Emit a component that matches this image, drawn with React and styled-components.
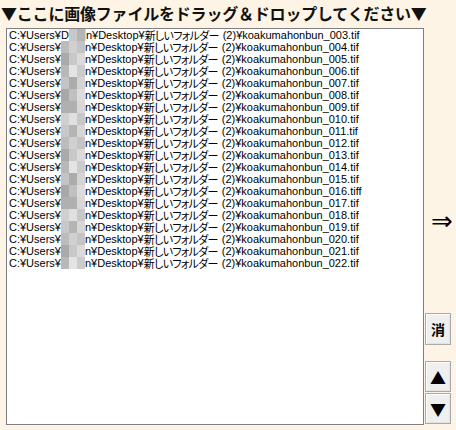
import React from "react";
import styled, { createGlobalStyle } from "styled-components";

const GlobalStyle = createGlobalStyle`
  html, body {
    margin: 0;
    padding: 0;
    background: #fdf4e5;
    overflow: hidden;
  }
`;

const files = [
  "003", "004", "005", "006", "007", "008", "009", "010", "011", "012",
  "013", "014", "015", "016", "017", "018", "019", "020", "021", "022",
].map((n) => `koakumahonbun_${n}.tif${n === "016" ? "f" : ""}`);

const mosaic = [
  ["#c8c8c8", "#b4b4b4", "#d6d6d6"],
  ["#bcbcbc", "#d0d0d0", "#c4c4c4"],
  ["#aaaaaa", "#c8c8c8", "#dadada"],
  ["#b8b8b8", "#e4e4e4", "#cccccc"],
  ["#c4c4c4", "#acacac", "#d4d4d4"],
  ["#a8a8a8", "#c0c0c0", "#dcdcdc"],
  ["#b0b0b0", "#b0b0b0", "#d8d8d8"],
  ["#d0d0d0", "#e0e0e0", "#c8c8c8"],
];

function App() {
  return (
    <>
      <GlobalStyle />
      <Page>
        <Title>▼ここに画像ファイルをドラッグ＆ドロップしてください▼</Title>
        <Body>
          <ListBox>
            {files.map((name, i) => (
              <Line key={name}>
                C:¥Users¥{i === 0 ? "D" : ""}
                <Mosaic $first={i === 0}>
                  {mosaic[i % mosaic.length].map((c, j) => (
                    <Cell key={j} style={{ background: c }} />
                  ))}
                </Mosaic>
                n¥Desktop¥<Kana>新しいフォルダー</Kana>(2)¥{name}
              </Line>
            ))}
          </ListBox>
          <Side>
            <Arrow>⇒</Arrow>
            <Spacer />
            <SideButton>消</SideButton>
            <ScrollButtons>
              <SideButton $tall>▲</SideButton>
              <SideButton $tall>▼</SideButton>
            </ScrollButtons>
          </Side>
        </Body>
      </Page>
    </>
  );
}

const Page = styled.div`
  width: 456px;
  height: 430px;
  display: flex;
  flex-direction: column;
`;

const Title = styled.div`
  height: 28px;
  padding-left: 1px;
  font-family: "Noto Sans CJK JP", sans-serif;
  font-weight: 700;
  font-size: 16px;
  line-height: 26px;
  color: #111;
  white-space: nowrap;
  letter-spacing: -0.2px;
`;

const Body = styled.div`
  display: flex;
  padding-left: 6px;
  gap: 1px;
`;

const ListBox = styled.div`
  width: 414px;
  height: 395px;
  padding-left: 2px;
  border: 1px solid #7f7f7f;
  background: #fff;
  overflow: hidden;
`;

const Line = styled.div`
  height: 12px;
  line-height: 12px;
  font-family: "Liberation Sans", "Noto Sans CJK JP", sans-serif;
  font-size: 11px;
  color: #000;
  white-space: nowrap;
`;

const Kana = styled.span`
  display: inline-block;
  vertical-align: top;
  height: 12px;
  line-height: 12px;
  font-family: "Noto Sans CJK JP", sans-serif;
  font-feature-settings: "palt";
  letter-spacing: -0.7px;
  margin-right: 4px;
`;

const Mosaic = styled.span`
  display: inline-flex;
  vertical-align: top;
  width: ${(p) => (p.$first ? "17px" : "24px")};
  height: 12px;
  overflow: hidden;
`;

const Cell = styled.span`
  flex: 0 0 8px;
  height: 12px;
`;

const Side = styled.div`
  display: flex;
  flex-direction: column;
  width: 30px;
  height: 397px;
`;

const Arrow = styled.div`
  margin-top: 180px;
  margin-left: 6px;
  font-family: "DejaVu Sans", sans-serif;
  font-size: 26px;
  line-height: 26px;
  color: #000;
  white-space: nowrap;
`;

const Spacer = styled.div`
  flex: 1;
`;

const ScrollButtons = styled.div`
  display: flex;
  flex-direction: column;
  gap: 1px;
  margin-top: 16px;
  margin-bottom: 1px;
`;

const SideButton = styled.button`
  width: 26px;
  height: ${(p) => (p.$tall ? "31px" : "32px")};
  padding: 0;
  border: 1px solid #a9a9a9;
  box-shadow: inset 1px 1px 0 #fff, inset -1px -1px 0 #e3e3e3;
  background: #efefef;
  font-family: "Noto Sans CJK JP", sans-serif;
  font-weight: 700;
  font-size: ${(p) => (p.$tall ? "16px" : "14px")};
  color: #000;
  display: flex;
  align-items: center;
  justify-content: center;
`;

export default App;
